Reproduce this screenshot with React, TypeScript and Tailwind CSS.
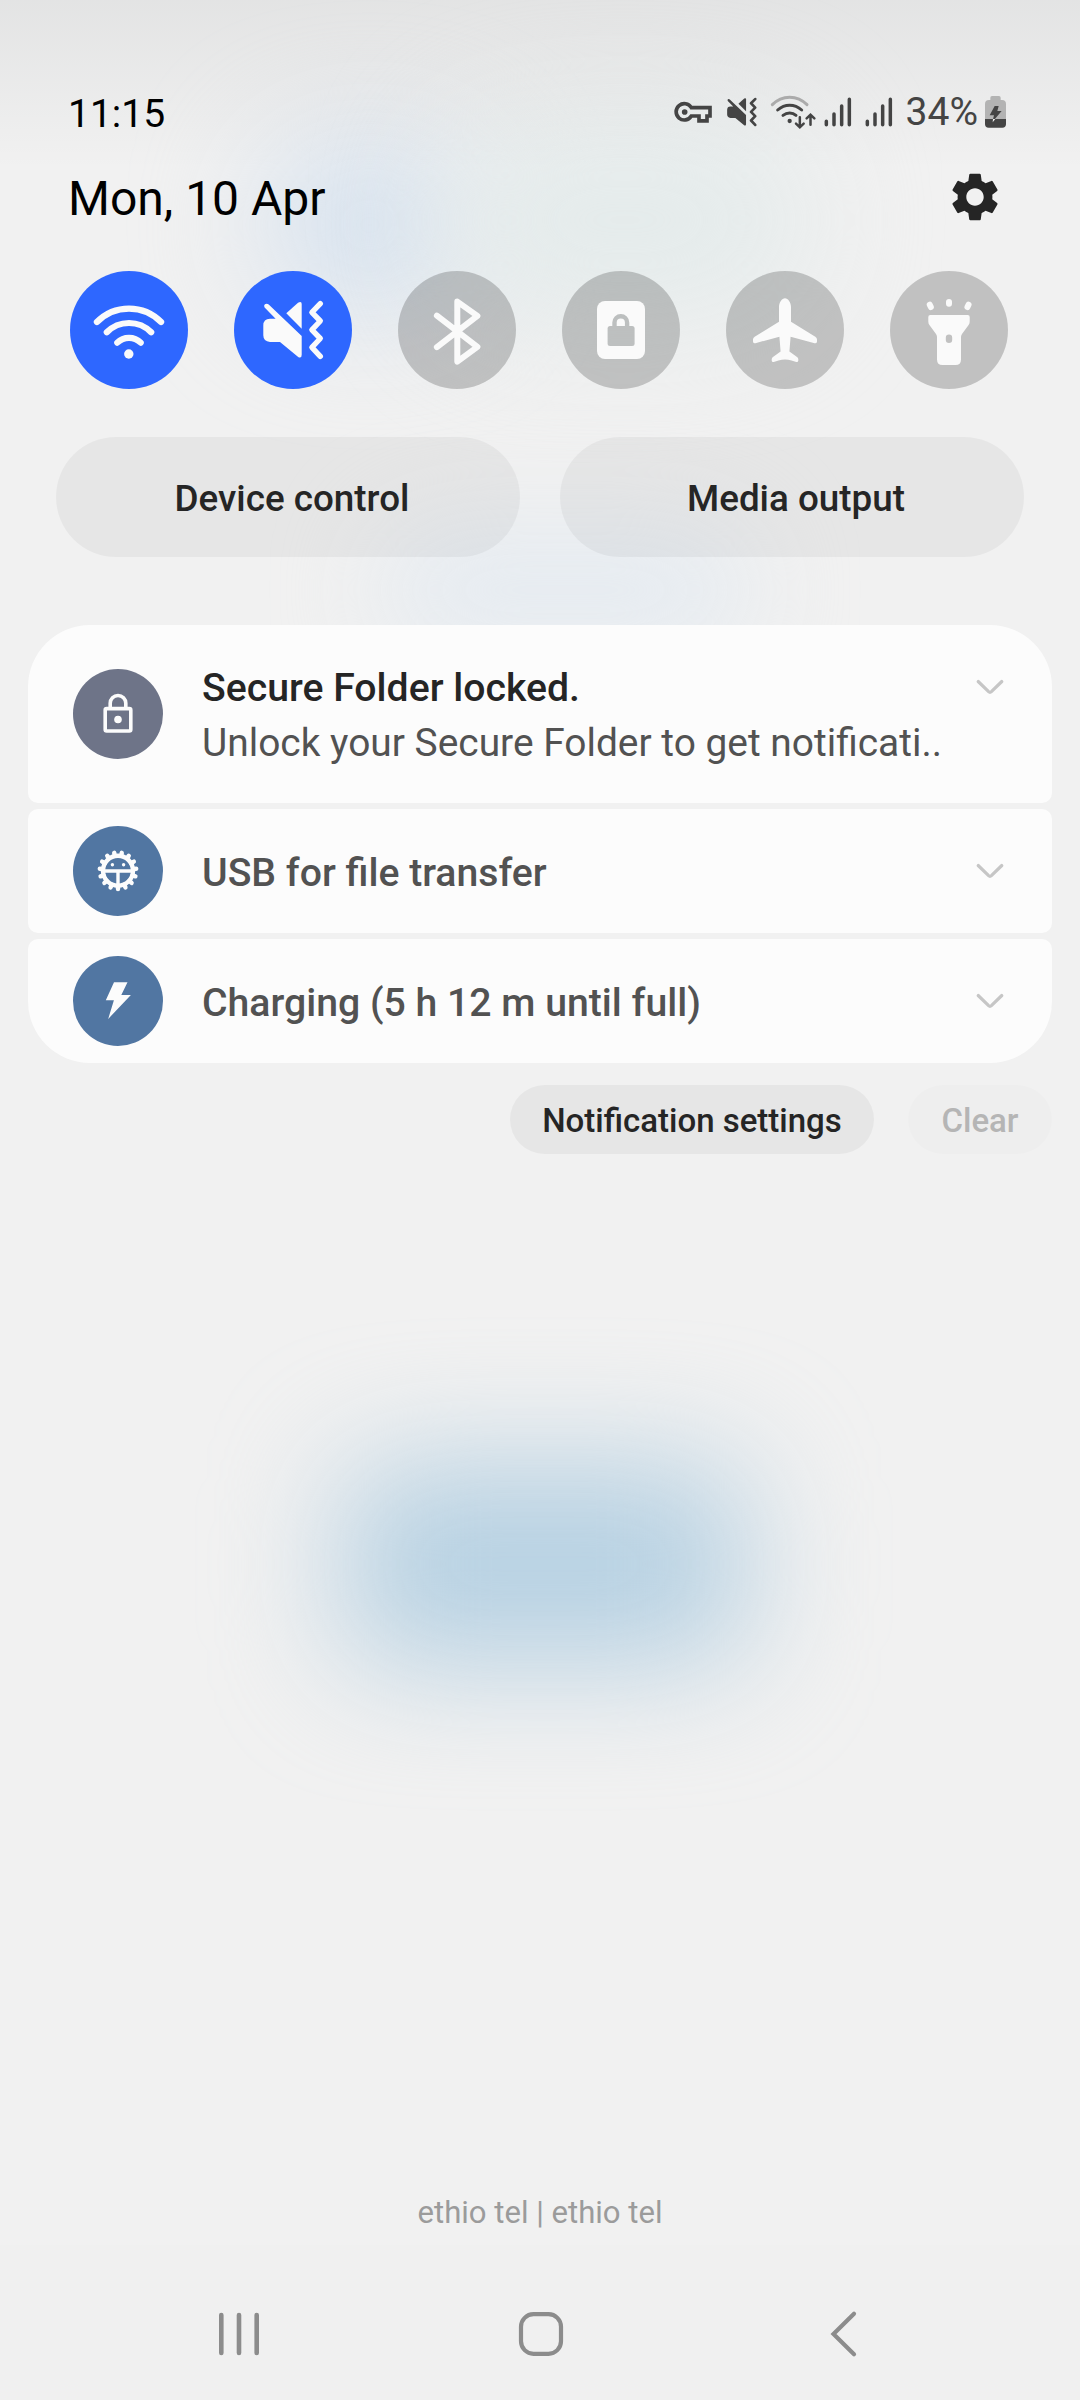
import type { ReactNode } from "react";
import { MdSettings } from "react-icons/md";

function VibrateMuteShape() {
  return (
    <g>
      <path
        fill="currentColor"
        d="M34.7 33.6L67.7 64.9V83.7Q67.7 87.6 64.5 86.2L46 71H36Q29.3 70.2 29.3 64.3V54.4Q29.3 47.9 36 47.7H41.6L30.6 36.6Q29.4 34.6 30.9 33.3Q32.8 32 34.7 33.6Z"
      />
      <path
        fill="currentColor"
        d="M52.3 42.3L64 31.7Q67.7 29.6 67.7 33V57.7Z"
      />
      <path
        d="M86.3 32.7L77.9 41.3L86.3 50L77.9 58.8L86.3 67.5L77.9 76.3L86.3 85.3"
        fill="none"
        stroke="currentColor"
        strokeWidth="5.4"
        strokeLinecap="round"
        strokeLinejoin="round"
      />
    </g>
  );
}

function KeyIcon() {
  return (
    <svg width="38" height="24" viewBox="72 61 114 72" fill="none" stroke="currentColor" strokeWidth="11">
      <path d="M124 84H180V109H171V123.500H147V109H124A24.500 24.500 0 1 1 124 84Z" />
      <circle cx="104" cy="97" r="8.500" fill="currentColor" stroke="none" />
    </svg>
  );
}

function StatusWifiIcon() {
  return (
    <svg width="46" height="36" viewBox="357 40 138 108" fill="none" stroke="currentColor" strokeWidth="9" strokeLinecap="round">
      <path className="text-[#ababab]" stroke="currentColor" d="M364 72Q386 49.500 416 49.500T468 72" />
      <path d="M380 88Q396 73.500 416 73.500T452 88" />
      <path d="M396 104Q405 97 416 97T435 104" />
      <circle cx="416" cy="121" r="6.500" fill="currentColor" stroke="none" />
      <g strokeWidth="7.500">
        <path d="M446.500 110V139M435 129L446.500 140L458 129" />
        <path d="M478.500 132V103M467 113L478.500 102L490 113" />
      </g>
    </svg>
  );
}

function SignalIcon() {
  return (
    <svg width="28" height="30" viewBox="521 50 84 90" stroke="currentColor" strokeWidth="10.500" strokeLinecap="round">
      <path d="M528 123V133M551 101V133M574 77V133M597 57V133" />
    </svg>
  );
}

function BatteryIcon() {
  return (
    <svg width="21" height="32" viewBox="1005 48 63 96">
      <path fill="#b3b3b3" d="M1021 60V53Q1021 48 1026 48H1047Q1052 48 1052 53V60H1056Q1068 60 1068 72V118H1005V72Q1005 60 1017 60Z" />
      <path fill="#444444" d="M1005 117H1068V132Q1068 143 1057 143H1016Q1005 143 1005 132Z" />
      <path fill="#444444" d="M1034 78H1046L1042 93H1055L1034 118H1029L1032 106H1019Z" />
      <path fill="#f0f0f0" d="M1029 117H1036L1028 127Z" />
    </svg>
  );
}

function WifiIcon() {
  return (
    <g fill="none" stroke="currentColor" strokeWidth="6.200" strokeLinecap="round">
      <path d="M26.900 51A45 45 0 0 1 91.100 51" />
      <path d="M36.800 61.300A31.200 31.200 0 0 1 81.200 61.300" />
      <path d="M47.300 71.700A16.400 16.400 0 0 1 70.700 71.700" />
      <circle cx="58.800" cy="83" r="4.700" fill="currentColor" stroke="none" />
    </g>
  );
}

function BluetoothIcon() {
  return (
    <path
      d="M38.900 44.700L79.400 75.800L59.300 90.600V30.600L79.400 44.900L38.900 76.200"
      fill="none"
      stroke="currentColor"
      strokeWidth="6"
      strokeLinecap="round"
      strokeLinejoin="round"
    />
  );
}

function RotationLockIcon() {
  return (
    <g>
      <mask id="rotation-lock">
        <rect width="118" height="118" fill="white" />
        <rect x="45.600" y="55" width="27" height="20" rx="2.500" fill="black" />
        <path d="M52.500 56V51.500A6.300 6.300 0 0 1 65.100 51.500V56" fill="none" stroke="black" strokeWidth="4.400" />
      </mask>
      <rect x="35" y="30" width="48" height="58" rx="8" fill="currentColor" mask="url(#rotation-lock)" />
    </g>
  );
}

function AirplaneIcon() {
  return (
    <path
      fill="currentColor"
      d="M59 27.300C62 27.300 65 31.500 65 36V50.800L89.300 65.800Q91 67 91 68.500V70.500Q91 72.800 88.600 72.200L64.600 65.700L63.400 80.400L71 86Q72.300 87 72.300 88.300V89.400Q72.300 91.300 70.300 91L65.500 89.600Q59 87.200 52.500 89.600L47.700 91Q45.700 91.300 45.700 89.400V88.300Q45.700 87 47 86L54.600 80.400L53.400 65.700L29.400 72.200Q27 72.800 27 70.500V68.500Q27 67 28.700 65.800L53 50.800V36C53 31.500 56 27.300 59 27.300Z"
    />
  );
}

function FlashlightIcon() {
  return (
    <g fill="currentColor">
      <path
        fillRule="evenodd"
        d="M40.300 43.900H77.700Q79.700 43.900 79.700 45.900V50.500Q79.700 52.500 78.600 54L72 63Q71 64.500 71 66V88.500Q71 94 65.500 94H52.500Q47 94 47 88.500V66Q47 64.500 46 63L39.400 54Q38.300 52.500 38.300 50.500V45.900Q38.300 43.900 40.300 43.900ZM59 63.600A3.200 3.200 0 0 0 55.800 66.800V68.800A3.200 3.200 0 0 0 62.200 68.800V66.800A3.200 3.200 0 0 0 59 63.600Z"
      />
      <rect x="56" y="28" width="6" height="7.800" rx="3" />
      <rect x="37.300" y="30.600" width="6" height="8.600" rx="3" transform="rotate(-25 40.300 34.900)" />
      <rect x="75" y="30.600" width="6" height="8.600" rx="3" transform="rotate(25 78 34.900)" />
    </g>
  );
}

function Tile({ active = false, children }: { active?: boolean; children: ReactNode }) {
  return (
    <button
      className={
        active
          ? "size-[118px] rounded-full bg-[#2e67ff] text-[#fafafa]"
          : "size-[118px] rounded-full bg-black/[0.195] text-[#fafafa]"
      }
    >
      <svg width="118" height="118" viewBox="0 0 118 118">
        {children}
      </svg>
    </button>
  );
}

function FolderLockIcon() {
  return (
    <g fill="none" stroke="currentColor" strokeWidth="3.600">
      <rect x="32.200" y="39.600" width="25.600" height="22.400" rx="1.500" />
      <path d="M37.200 39V34.300A7.800 7.800 0 0 1 52.800 34.300V39" />
      <circle cx="45" cy="50.500" r="3.800" fill="currentColor" stroke="none" />
    </g>
  );
}

const TEETH = Array.from({ length: 15 }, (_, i) => i * 24);

function UsbGearIcon() {
  return (
    <g fill="none" stroke="currentColor" strokeWidth="3.400">
      <circle cx="45" cy="44.700" r="15" strokeWidth="4.400" />
      {TEETH.map((angle) => (
        <path key={angle} d="M45 60V63" strokeWidth="4.400" strokeLinecap="round" transform={`rotate(${angle} 45 44.700)`} />
      ))}
      <path d="M31.500 45H58.500M45 45V59" />
      <circle cx="39.400" cy="38.700" r="1.700" fill="currentColor" stroke="none" />
      <circle cx="50.600" cy="38.700" r="1.700" fill="currentColor" stroke="none" />
    </g>
  );
}

function BoltIcon() {
  return <path fill="currentColor" d="M41 26.300H54.500L48.300 39H57.900L35.200 62.900L40.900 44.200H32.800Z" />;
}

function Badge({ color, children }: { color: string; children: ReactNode }) {
  return (
    <svg width="90" height="90" viewBox="0 0 90 90" className={`shrink-0 rounded-full text-[#fcfcfc] ${color}`}>
      {children}
    </svg>
  );
}

function Chevron() {
  return (
    <svg width="30" height="18" viewBox="0 0 30 18" className="shrink-0 text-[#c6c6c6]">
      <path d="M3.200 3.500L13.600 13.700Q15 15 16.400 13.700L26.800 3.500" fill="none" stroke="currentColor" strokeWidth="3.200" strokeLinecap="round" />
    </svg>
  );
}

function Wallpaper() {
  return (
    <div className="absolute inset-0 -z-10 overflow-hidden">
      <div className="absolute left-[260px] top-[140px] h-[170px] w-[220px] rounded-full bg-[#d6e2ef] blur-[60px]" />
      <div className="absolute left-[440px] top-[120px] h-[200px] w-[370px] rounded-full bg-[#e4ebeb] blur-[60px]" />
      <div className="absolute left-[380px] top-[530px] h-[120px] w-[370px] rounded-full bg-[#e5ebf1] blur-[50px]" />
      <div className="absolute left-[344px] top-[1466px] h-[196px] w-[400px] rounded-[40px] bg-[#b5d0e2] blur-[62px]" />
      <div className="absolute inset-x-0 top-0 h-[170px] bg-linear-to-b from-[#0a1418]/[0.06] to-transparent" />
    </div>
  );
}

export default function App() {
  return (
    <div className="relative isolate flex h-[2400px] w-[1080px] flex-col overflow-hidden bg-[#f1f1f1] font-['Roboto',sans-serif] text-[#252525]">
      <Wallpaper />

      <div className="mt-[83px] flex h-[60px] items-center justify-between pl-[68px] pr-[74px]">
        <span className="pt-[2px] text-[39px] leading-[60px] text-black">11:15</span>
        <div className="flex items-center pb-[2px] text-[#444444]">
          <KeyIcon />
          <svg width="30" height="30" viewBox="29 29 61 60" className="ml-[15px]">
            <VibrateMuteShape />
          </svg>
          <div className="ml-[13px]">
            <StatusWifiIcon />
          </div>
          <div className="ml-[8px]">
            <SignalIcon />
          </div>
          <div className="ml-[13px]">
            <SignalIcon />
          </div>
          <span className="ml-[13px] text-[39px] leading-[60px]">34%</span>
          <div className="ml-[7px]">
            <BatteryIcon />
          </div>
        </div>
      </div>

      <div className="mt-[26px] flex h-[60px] items-center justify-between pl-[68px] pr-[76px]">
        <span className="text-[48px] leading-[60px] text-black">Mon, 10 Apr</span>
        <MdSettings className="mb-1 size-[58px]" />
      </div>

      <div className="mt-[42px] flex justify-between pl-[70px] pr-[72px]">
        <Tile active>
          <WifiIcon />
        </Tile>
        <Tile active>
          <VibrateMuteShape />
        </Tile>
        <Tile>
          <BluetoothIcon />
        </Tile>
        <Tile>
          <RotationLockIcon />
        </Tile>
        <Tile>
          <AirplaneIcon />
        </Tile>
        <Tile>
          <FlashlightIcon />
        </Tile>
      </div>

      <div className="mt-[48px] flex gap-[40px] px-[56px] text-[36.800px] font-medium">
        <button className="h-[120px] flex-1 rounded-full bg-black/[0.045] pl-[8px] pt-[4px]">Device control</button>
        <button className="h-[120px] flex-1 rounded-full bg-black/[0.045] pl-[8px] pt-[4px]">Media output</button>
      </div>

      <div className="mt-[68px] flex flex-col gap-[6px] px-[28px] text-[39.200px]">
        <div className="flex h-[178px] items-start rounded-t-[62px] rounded-b-[10px] bg-[#fcfcfc] pl-[45px] pr-[47px]">
          <div className="mt-[44px] flex">
            <Badge color="bg-[#6e7488]">
              <FolderLockIcon />
            </Badge>
          </div>
          <div className="ml-[39px] mt-[36px] flex-1 whitespace-nowrap">
            <div className="font-medium leading-[55px]">Secure Folder locked.</div>
            <div className="text-[38.900px] leading-[53px] text-[#525252]">Unlock your Secure Folder to get notificati..</div>
          </div>
          <div className="mt-[53px]">
            <Chevron />
          </div>
        </div>
        <div className="flex h-[124px] items-center rounded-[10px] bg-[#fcfcfc] pl-[45px] pr-[47px]">
          <Badge color="bg-[#5176a2]">
            <UsbGearIcon />
          </Badge>
          <div className="ml-[39px] flex-1 pt-[5px] font-medium text-[#525252]">USB for file transfer</div>
          <Chevron />
        </div>
        <div className="flex h-[124px] items-center rounded-t-[10px] rounded-b-[62px] bg-[#fcfcfc] pl-[45px] pr-[47px]">
          <Badge color="bg-[#5176a2]">
            <BoltIcon />
          </Badge>
          <div className="ml-[39px] flex-1 pt-[5px] font-medium text-[#525252]">Charging (5 h 12 m until full)</div>
          <Chevron />
        </div>
      </div>

      <div className="mt-[22px] flex justify-end gap-[34px] pr-[28px] text-[33px] font-medium">
        <button className="h-[69px] w-[364px] rounded-full bg-black/[0.045] pt-[2px]">Notification settings</button>
        <button className="h-[69px] w-[144px] rounded-full bg-black/[0.012] pt-[2px] text-[#b5b5b5]">Clear</button>
      </div>

      <div className="mt-auto pb-[12px] text-center text-[31.100px] leading-[40px] text-[#9b9b9b]">ethio tel | ethio tel</div>

      <div className="flex h-[155px] bg-[#f0f0f0] pl-[217px] pt-[65px] text-[#8c8c8c]">
        <svg width="44" height="48" viewBox="0 0 44 48" stroke="currentColor" strokeWidth="4.600" strokeLinecap="round">
          <path d="M4.300 5V43M22 5V43M39.700 5V43" />
        </svg>
        <svg width="48" height="48" viewBox="0 0 48 48" className="ml-[256px]" fill="none" stroke="currentColor" strokeWidth="4.200">
          <rect x="4" y="4.200" width="40" height="39.600" rx="12.500" />
        </svg>
        <svg width="30" height="48" viewBox="0 0 30 48" className="ml-[264px]" fill="none" stroke="currentColor" strokeWidth="4.200" strokeLinecap="round">
          <path d="M25 3.800L4.500 24L25 44.200" />
        </svg>
      </div>
    </div>
  );
}
